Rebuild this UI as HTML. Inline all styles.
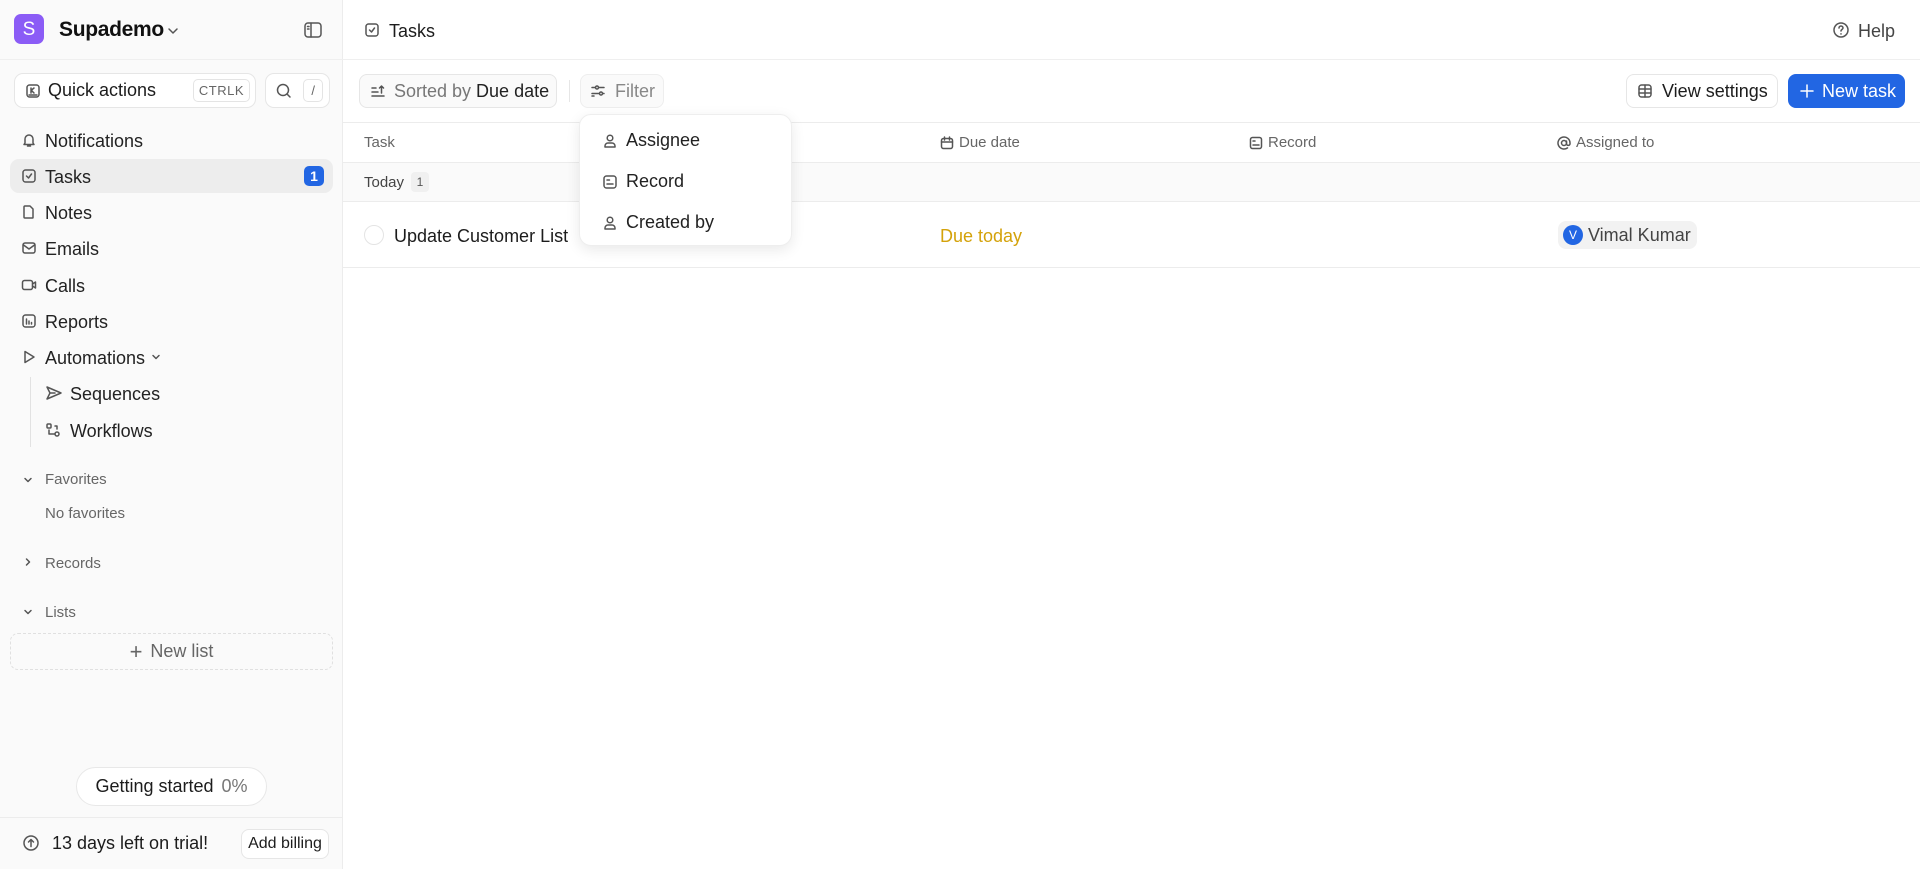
<!DOCTYPE html>
<html><head><meta charset="utf-8"><style>
*{box-sizing:border-box;margin:0;padding:0}
body{width:1920px;height:869px;overflow:hidden;background:#fff;font-family:"Liberation Sans",sans-serif;color:#1c1c1c;position:relative}
.a{position:absolute}
.sb{left:0;top:0;width:343px;height:869px;background:#fafafa;border-right:1px solid #ececec}
.ni{position:absolute;left:10px;width:323px;height:34px;display:flex;align-items:center;font-size:18px;color:#222}
.ni svg{position:absolute;left:11px}
.ni span{position:absolute;left:35px;top:8px}
svg{fill:none;stroke:#555;stroke-width:1.5;stroke-linecap:round;stroke-linejoin:round}
.sec{position:absolute;left:45px;font-size:15px;color:#666}
.th{position:absolute;top:134px;font-size:15px;color:#666;display:flex;align-items:center;gap:5px}
.btn{position:absolute;height:34px;border:1px solid #e6e6e6;border-radius:8px;display:flex;align-items:center;font-size:18px;background:#fff}
.mi{position:absolute;left:22px;display:flex;align-items:center;gap:8px;font-size:18px;color:#222}
</style></head><body>
<div class="a sb"></div>
<div class="a" style="left:0;top:59px;width:1920px;height:1px;background:#efefef"></div>
<div class="a" style="left:14px;top:14px;width:30px;height:30px;border-radius:7px;background:#8b5cf6;color:#fff;font-size:19px;display:flex;align-items:center;justify-content:center;padding-top:2px">S</div>
<div class="a" style="left:59px;top:18px;font-size:21px;font-weight:bold;color:#111;letter-spacing:-0.3px">Supademo</div>
<svg class="a" style="left:167px;top:25px" width="12" height="12" viewBox="0 0 12 12"><path d="M2 4l4 4 4-4"/></svg>
<svg class="a" style="left:303px;top:20px" width="20" height="20" viewBox="0 0 20 20"><rect x="2" y="3" width="16" height="14" rx="3"/><path d="M8 3v14M4.5 6.5h1.5M4.5 9h1.5"/></svg>
<div class="btn" style="left:14px;top:73px;width:242px;height:35px;border-radius:9px">
<svg style="position:absolute;left:10px" width="16" height="16" viewBox="0 0 16 16"><rect x="2" y="2" width="12" height="12" rx="2.5"/><path d="M6 5v5M6 7.5l3-2.5M6.5 7.5L9 10M4 12h8"/></svg>
<span style="position:absolute;left:33px">Quick actions</span>
<span style="position:absolute;right:5px;border:1px solid #e4e4e4;border-radius:5px;font-size:13px;color:#666;padding:3px 5px;letter-spacing:.5px">CTRLK</span></div>
<div class="btn" style="left:265px;top:73px;width:65px;height:35px;border-radius:9px">
<svg style="position:absolute;left:9px" width="18" height="18" viewBox="0 0 18 18"><circle cx="8" cy="8" r="5.5"/><path d="M12 12l3 3"/></svg>
<span style="position:absolute;right:6px;border:1px solid #e4e4e4;border-radius:5px;font-size:13px;color:#666;padding:3px 7px">/</span></div>

<div class="ni" style="top:123px"><svg width="16" height="16" viewBox="0 0 16 16"><path d="M4 11V7a4 4 0 018 0v4l1 1.5H3zM6.5 14h3"/></svg><span>Notifications</span></div>
<div class="ni" style="top:159px;background:#ededed;border-radius:9px"><svg width="16" height="16" viewBox="0 0 16 16"><rect x="2" y="2" width="12" height="12" rx="2.5"/><path d="M5.5 8l2 2 3-4"/></svg><span>Tasks</span>
<div style="position:absolute;right:9px;width:20px;height:20px;border-radius:5px;background:#2266e3;color:#fff;font-size:14px;font-weight:bold;display:flex;align-items:center;justify-content:center">1</div></div>
<div class="ni" style="top:195px"><svg width="16" height="16" viewBox="0 0 16 16"><path d="M4 2h5l3 3v8.5a.5.5 0 01-.5.5h-7.5a1 1 0 01-1-1V3a1 1 0 011-1z"/></svg><span>Notes</span></div>
<div class="ni" style="top:231px"><svg width="16" height="16" viewBox="0 0 16 16"><rect x="2" y="3" width="12" height="10" rx="2"/><path d="M2.5 5l5.5 4 5.5-4"/></svg><span>Emails</span></div>
<div class="ni" style="top:268px"><svg width="16" height="16" viewBox="0 0 16 16"><rect x="1.5" y="3.5" width="10" height="9" rx="2"/><path d="M11.5 7l3-2v6l-3-2"/></svg><span>Calls</span></div>
<div class="ni" style="top:304px"><svg width="16" height="16" viewBox="0 0 16 16"><rect x="2" y="2" width="12" height="12" rx="2.5"/><path d="M5.5 6v5M8 8v3M10.5 9.5v1.5"/></svg><span>Reports</span></div>
<div class="ni" style="top:340px"><svg width="16" height="16" viewBox="0 0 16 16"><path d="M4 2.5l9 5.5-9 5.5z"/></svg><span>Automations</span>
<svg style="left:141px" width="10" height="10" viewBox="0 0 10 10"><path d="M2 3.5l3 3 3-3"/></svg></div>
<div class="a" style="left:30px;top:377px;width:1px;height:70px;background:#e2e2e2"></div>
<div class="ni" style="top:376px"><svg style="left:35px" width="18" height="16" viewBox="0 0 18 16"><path d="M2 2l14 6-14 6 3-6zM5 8h5"/></svg><span style="left:60px">Sequences</span></div>
<div class="ni" style="top:413px"><svg style="left:35px" width="16" height="16" viewBox="0 0 16 16"><rect x="2" y="2" width="4" height="4" rx="1"/><circle cx="12" cy="12" r="2"/><path d="M10 4h2v3M4 8v4h6"/></svg><span style="left:60px">Workflows</span></div>

<svg class="a" style="left:23px;top:475px" width="10" height="10" viewBox="0 0 10 10"><path d="M2 3.5l3 3 3-3"/></svg>
<div class="sec" style="top:471px">Favorites</div>
<div class="sec" style="top:505px">No favorites</div>
<svg class="a" style="left:23px;top:557px" width="10" height="10" viewBox="0 0 10 10"><path d="M3.5 2l3 3-3 3"/></svg>
<div class="sec" style="top:555px">Records</div>
<svg class="a" style="left:23px;top:607px" width="10" height="10" viewBox="0 0 10 10"><path d="M2 3.5l3 3 3-3"/></svg>
<div class="sec" style="top:604px">Lists</div>
<div class="a" style="left:10px;top:633px;width:323px;height:37px;border:1px dashed #e0e0e0;border-radius:8px;display:flex;align-items:center;justify-content:center;font-size:18px;color:#666;gap:8px"><span style="font-size:22px;font-weight:300">+</span>New list</div>
<div class="a" style="left:76px;top:767px;width:191px;height:39px;border:1px solid #e8e8e8;border-radius:20px;background:#fff;display:flex;align-items:center;justify-content:center;font-size:18px;gap:8px">Getting started <span style="color:#777">0%</span></div>
<div class="a" style="left:0;top:817px;width:343px;height:1px;background:#ececec"></div>
<svg class="a" style="left:22px;top:834px" width="18" height="18" viewBox="0 0 18 18"><circle cx="9" cy="9" r="7"/><path d="M9 12.5v-7M6.5 8L9 5.5 11.5 8"/></svg>
<div class="a" style="left:52px;top:833px;font-size:18px">13 days left on trial!</div>
<div class="a" style="left:241px;top:829px;width:88px;height:30px;border:1px solid #e6e6e6;border-radius:8px;background:#fff;font-size:16px;display:flex;align-items:center;justify-content:center">Add billing</div>

<svg class="a" style="left:364px;top:22px" width="16" height="16" viewBox="0 0 16 16"><rect x="2" y="2" width="12" height="12" rx="2.5"/><path d="M5.5 8l2 2 3-4"/></svg>
<div class="a" style="left:389px;top:21px;font-size:18px">Tasks</div>
<svg class="a" style="left:1832px;top:21px" width="18" height="18" viewBox="0 0 18 18"><circle cx="9" cy="9" r="7"/><path d="M7 7a2 2 0 114 0c0 1.3-2 1.5-2 3M9 12.8v.2"/></svg>
<div class="a" style="left:1858px;top:21px;font-size:18px;color:#444">Help</div>

<div class="btn" style="left:359px;top:74px;width:198px;background:#fafafa">
<svg style="position:absolute;left:10px" width="16" height="16" viewBox="0 0 16 16"><path d="M2 13h12M2 9h6M2 5h4M11.5 10V3M9.5 5l2-2 2 2"/></svg>
<span style="position:absolute;left:34px;color:#777">Sorted by <span style="color:#222">Due date</span></span></div>
<div class="a" style="left:569px;top:80px;width:1px;height:22px;background:#e6e6e6"></div>
<div class="btn" style="left:580px;top:74px;width:84px;background:#fafafa;border-color:#eee">
<svg style="position:absolute;left:9px" width="16" height="16" viewBox="0 0 16 16"><path d="M2 4.5h3M9 4.5h5M2 10.5h7M13 10.5h1M2 13h2"/><circle cx="7" cy="4.5" r="1.5"/><circle cx="11" cy="10.5" r="1.5"/></svg>
<span style="position:absolute;left:34px;color:#888">Filter</span></div>
<div class="btn" style="left:1626px;top:74px;width:152px">
<svg style="position:absolute;left:10px" width="16" height="16" viewBox="0 0 16 16"><rect x="2" y="2" width="12" height="12" rx="2.5"/><path d="M2 6h12M2 10h12M8 2v12"/></svg>
<span style="position:absolute;left:35px">View settings</span></div>
<div class="btn" style="left:1788px;top:74px;width:117px;background:#2266e3;border-color:#2266e3;color:#fff">
<svg style="position:absolute;left:10px;stroke:#fff" width="16" height="16" viewBox="0 0 16 16"><path d="M8 2v12M2 8h12"/></svg>
<span style="position:absolute;left:33px">New task</span></div>

<div class="a" style="left:343px;top:122px;width:1577px;height:1px;background:#ececec"></div>
<div class="th" style="left:364px">Task</div>
<div class="th" style="left:940px"><svg width="14" height="14" viewBox="0 0 14 14"><rect x="1.5" y="2.5" width="11" height="10" rx="2"/><path d="M1.5 6h11M4.5 1v3M9.5 1v3"/></svg>Due date</div>
<div class="th" style="left:1249px"><svg width="14" height="14" viewBox="0 0 14 14"><rect x="1.5" y="1.5" width="11" height="11" rx="2"/><path d="M4 5h2M4 9h6"/></svg>Record</div>
<div class="th" style="left:1557px"><svg width="14" height="14" viewBox="0 0 14 14"><circle cx="7" cy="7" r="2.5"/><path d="M9.5 5v3a1.8 1.8 0 003.5 0V7a6 6 0 10-2.5 4.9"/></svg>Assigned to</div>
<div class="a" style="left:343px;top:162px;width:1577px;height:40px;background:#fafafa;border-top:1px solid #ececec;border-bottom:1px solid #ececec"></div>
<div class="a" style="left:364px;top:174px;font-size:15px;color:#444">Today</div>
<div class="a" style="left:411px;top:172px;width:18px;height:20px;background:#f0f0f0;border-radius:4px;font-size:12px;color:#555;display:flex;align-items:center;justify-content:center">1</div>
<div class="a" style="left:343px;top:267px;width:1577px;height:1px;background:#ececec"></div>
<div class="a" style="left:364px;top:225px;width:20px;height:20px;border-radius:50%;border:1px solid #e4e4e4"></div>
<div class="a" style="left:394px;top:226px;font-size:18px">Update Customer List</div>
<div class="a" style="left:940px;top:226px;font-size:18px;color:#d4a20a">Due today</div>
<div class="a" style="left:1558px;top:221px;width:139px;height:28px;background:#f2f2f2;border-radius:8px;display:flex;align-items:center;font-size:18px;color:#444">
<div style="margin-left:5px;width:20px;height:20px;border-radius:50%;background:#2266e3;color:#fff;font-size:12px;display:flex;align-items:center;justify-content:center">V</div><span style="margin-left:5px">Vimal Kumar</span></div>

<div class="a" style="left:579px;top:114px;width:213px;height:132px;background:#fff;border:1px solid #eee;border-radius:12px;box-shadow:0 4px 14px rgba(0,0,0,.09)">
<div class="mi" style="top:15px"><svg width="16" height="16" viewBox="0 0 16 16"><circle cx="8" cy="5" r="2.8"/><path d="M3 14v-1a3 3 0 013-3h4a3 3 0 013 3v1z"/></svg>Assignee</div>
<div class="mi" style="top:56px"><svg width="16" height="16" viewBox="0 0 16 16"><rect x="2" y="2" width="12" height="12" rx="2.5"/><path d="M5 6h2.5M5 10h6"/></svg>Record</div>
<div class="mi" style="top:97px"><svg width="16" height="16" viewBox="0 0 16 16"><circle cx="8" cy="5" r="2.8"/><path d="M3 14v-1a3 3 0 013-3h4a3 3 0 013 3v1z"/></svg>Created by</div>
</div>
</body></html>
